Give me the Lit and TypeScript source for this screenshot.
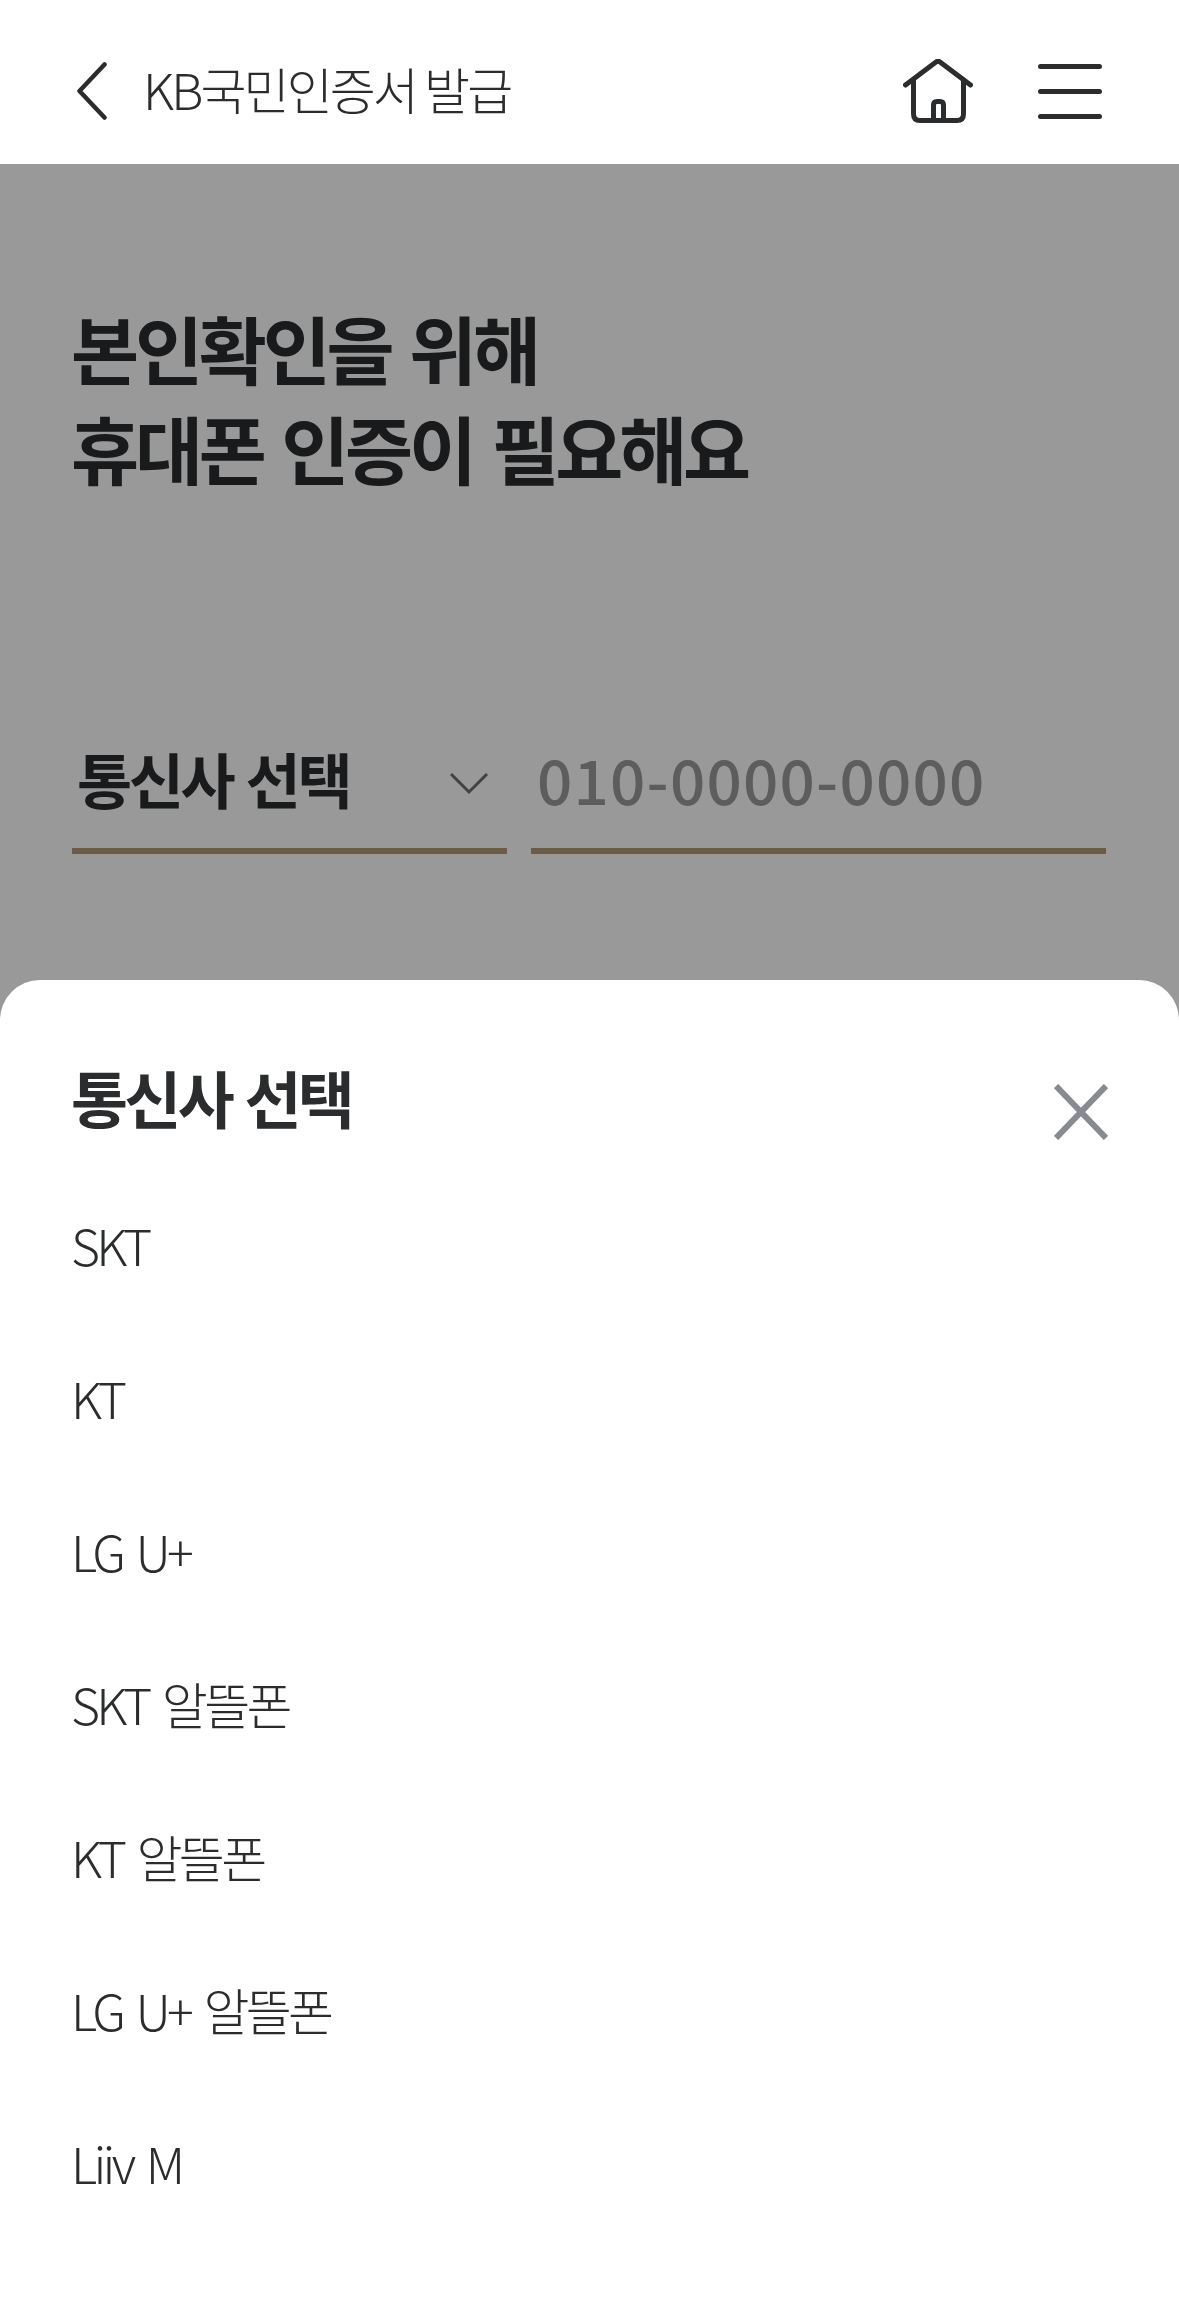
import { LitElement, html, css } from "lit";
import { customElement } from "lit/decorators.js";

const items = ["SKT", "KT", "LG U+", "SKT 알뜰폰", "KT 알뜰폰", "LG U+ 알뜰폰", "Liiv M"];

@customElement("app-root")
export class AppRoot extends LitElement {
  static styles = css`
    :host {
      display: block;
      position: relative;
      width: 1179px;
      height: 2321px;
      overflow: hidden;
      background: #fff;
      color: #2b2c2e;
      font-family: "Noto Sans CJK KR", "Noto Sans", sans-serif;
    }
    .header {
      height: 164px;
      box-sizing: border-box;
      display: flex;
      align-items: center;
      padding: 18px 77px 0 77px;
    }
    .back { width: 30px; height: 58px; display: block; }
    .page-title {
      margin: -6px 0 0 36px;
      font-size: 50px;
      font-weight: 300;
      letter-spacing: -2.9px;
      line-height: 64px;
      flex: 1;
      white-space: nowrap;
    }
    .home { width: 70px; height: 64px; display: block; margin-right: 65px; }
    .menu { width: 64px; height: 55px; display: block; }
    .intro { padding: 133px 71px 0; }
    h1 {
      margin: 0;
      font-size: 74px;
      font-weight: 700;
      line-height: 100px;
      letter-spacing: -4.2px;
      word-spacing: 6px;
      white-space: nowrap;
    }
    .fields {
      display: flex;
      gap: 24px;
      padding: 0 72px;
      margin-top: 226px;
    }
    .select {
      width: 435px;
      height: 131px;
      box-sizing: border-box;
      border-bottom: 6px solid #b49974;
      display: flex;
      align-items: center;
      justify-content: space-between;
      padding: 0 18px 16px 5px;
      font-size: 60px;
      font-weight: 700;
      letter-spacing: -3.4px;
      word-spacing: 3px;
    }
    .chev { width: 40px; height: 24px; display: block; margin-top: 10px; }
    .phone {
      width: 575px;
      height: 131px;
      box-sizing: border-box;
      border-bottom: 6px solid #b49974;
      padding: 0 0 16px 6px;
      display: flex;
      align-items: center;
      font-size: 62px;
      font-weight: 500;
      color: #9b9b9b;
      letter-spacing: 1.2px;
    }
    .dim {
      position: absolute;
      inset: 164px 0 0 0;
      background: rgba(0, 0, 0, 0.4);
    }
    .sheet {
      position: absolute;
      left: 0;
      right: 0;
      top: 980px;
      bottom: 0;
      background: #fff;
      border-radius: 40px 40px 0 0;
      padding: 72px 71px 0 71px;
    }
    .sheet-head {
      display: flex;
      justify-content: space-between;
      align-items: flex-start;
      height: 115px;
    }
    .sheet-title {
      font-size: 62px;
      font-weight: 700;
      line-height: 90px;
      letter-spacing: -3.7px;
      word-spacing: 3px;
      white-space: nowrap;
    }
    .close { width: 54px; height: 56px; display: block; margin: 32px 0 0 0; }
    .list { list-style: none; margin: 0; padding: 0; }
    .list li {
      height: 153px;
      display: flex;
      align-items: center;
      font-size: 50px;
      font-weight: 300;
      letter-spacing: -3.7px;
      word-spacing: 6px;
      white-space: pre;
    }
  `;

  render() {
    return html`
      <div class="header">
        <svg class="back" viewBox="0 0 30 58" fill="none" stroke="#2b2c2e" stroke-width="4.5" stroke-linecap="round" stroke-linejoin="round"><path d="M27.5 2.5 L2.5 29 L27.5 55.5"/></svg>
        <div class="page-title">KB국민인증서 발급</div>
        <svg class="home" viewBox="0 0 70 64" fill="none" stroke="#2b2c2e" stroke-width="5" stroke-linecap="round" stroke-linejoin="round">
          <path d="M2.5 26 L33 3 Q35 1.7 37 3 L67.5 26"/>
          <path d="M10.5 21 V55 Q10.5 61.5 17 61.5 H54 Q60.5 61.5 60.5 55 V21"/>
          <path d="M30.5 61 V46 Q30.5 42.5 34 42.5 H37 Q40.5 42.5 40.5 46 V61"/>
        </svg>
        <svg class="menu" viewBox="0 0 64 55" fill="none" stroke="#2b2c2e" stroke-width="5" stroke-linecap="round"><path d="M2.5 2.5 H61.5 M2.5 27.5 H61.5 M2.5 52.5 H61.5"/></svg>
      </div>
      <div class="intro"><h1>본인확인을 위해<br />휴대폰 인증이 필요해요</h1></div>
      <div class="fields">
        <div class="select">
          <span>통신사 선택</span>
          <svg class="chev" viewBox="0 0 40 24" fill="none" stroke="#6e6e6e" stroke-width="3"><path d="M2 3 L20 21 L38 3"/></svg>
        </div>
        <div class="phone">010-0000-0000</div>
      </div>
      <div class="dim"></div>
      <div class="sheet">
        <div class="sheet-head">
          <div class="sheet-title">통신사 선택</div>
          <svg class="close" viewBox="0 0 54 56" fill="none" stroke="#878b91" stroke-width="6"><path d="M2 2 L52 54 M52 2 L2 54"/></svg>
        </div>
        <ul class="list">${items.map((i) => html`<li>${i}</li>`)}</ul>
      </div>
    `;
  }
}
